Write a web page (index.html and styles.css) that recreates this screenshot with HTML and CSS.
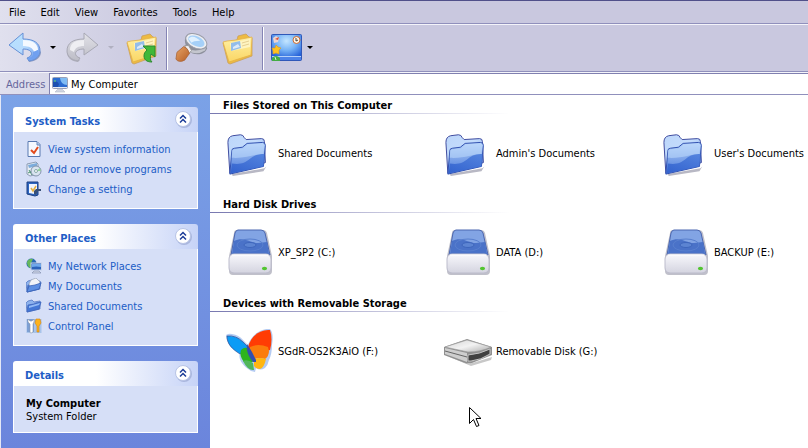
FILE: index.html
```html
<!DOCTYPE html>
<html lang="en">
<head>
<meta charset="utf-8">
<title>My Computer</title>
<link rel="stylesheet" href="styles.css">
</head>
<body>
<svg class="defs" aria-hidden="true">
  <defs>
    <linearGradient id="gBack" x1="0" y1="0" x2="1" y2="1"><stop offset="0" stop-color="#b4e2ff"/><stop offset=".5" stop-color="#b9dcfd"/><stop offset="1" stop-color="#5a8ce8"/></linearGradient>
    <linearGradient id="gFwd" x1="0" y1="0" x2="0" y2="1"><stop offset="0" stop-color="#e2e2e8"/><stop offset="1" stop-color="#bcbcc6"/></linearGradient>
    <linearGradient id="gYel" x1="0" y1="0" x2="0" y2="1"><stop offset="0" stop-color="#fff0a4"/><stop offset="1" stop-color="#fad664"/></linearGradient>
    <linearGradient id="gBlue" x1="0" y1="0" x2="1" y2="1"><stop offset="0" stop-color="#bcd6fa"/><stop offset=".45" stop-color="#c4dcfc"/><stop offset="1" stop-color="#6f9ae6"/></linearGradient>
    <linearGradient id="gFront" x1="0" y1="0" x2="0" y2="1"><stop offset="0" stop-color="#b4d2fa"/><stop offset="1" stop-color="#4a78d8"/></linearGradient>
    <linearGradient id="gDeep" x1="1" y1="0" x2="0" y2="1"><stop offset="0" stop-color="#4a7cdc"/><stop offset="1" stop-color="#2e5ecc"/></linearGradient>
    <linearGradient id="gWhite" x1="0" y1="0" x2="0" y2="1"><stop offset="0" stop-color="#f8f8fc"/><stop offset="1" stop-color="#d4d4e0"/></linearGradient>
    <linearGradient id="gGrey" x1="0" y1="0" x2="1" y2="1"><stop offset="0" stop-color="#d4d4d4"/><stop offset=".5" stop-color="#f2f2f2"/><stop offset="1" stop-color="#acacac"/></linearGradient>
    <linearGradient id="gWood" x1="0" y1="0" x2="1" y2="1"><stop offset="0" stop-color="#e8a466"/><stop offset="1" stop-color="#b45c24"/></linearGradient>
    <radialGradient id="gDesk" cx=".5" cy=".25" r=".7"><stop offset="0" stop-color="#c4e6ff"/><stop offset=".5" stop-color="#78b4f6"/><stop offset="1" stop-color="#2460d8"/></radialGradient>

    <symbol id="folder" viewBox="-1 -4 50 50">
      <path d="M5 43l34-6 2-2-3 5-32 5z" fill="#b8b8c4"/>
      <path d="M3 42L1 10q0-6 5-7l8-1q3 0 4 3l2 2 16-1q3 0 3 3l1 22z" fill="url(#gBlue)" stroke="#3a469c"/>
      <path d="M3 43L5 19q0-3 3-3l8-1 5-4 16-1q3 0 3 3l-2 22z" fill="url(#gFront)" stroke="#2c4cae"/>
      <path d="M5 26L5 19q0-2 3-2l9-1 5-4 14-1q3 0 3 2l-1 9c-9 0-18 5-33 4z" fill="#c0dafc" opacity=".55"/>
      <path d="M4 42L5 32c9 1 13 0 19-5 4-4 10-5 15-5l-1 13z" fill="url(#gDeep)" opacity=".85"/>
    </symbol>
    <symbol id="drive" viewBox="0 -1 48 48">
      <path d="M11 1h26q3 0 4 3l5 23v15q0 4-4 4H7q-4 0-4-4V27L8 4q0-3 3-3z" fill="#c0c0ca"/>
      <path d="M12 1h23q3 0 4 3l5 22H5L9 4q1-3 3-3z" fill="#82a4e4" stroke="#4a66b0"/>
      <path d="M8 12c10-5 16 2 24 2 4 0 6-1 9-1l2 12H6z" fill="#4a72c8"/>
      <ellipse cx="24" cy="16" rx="13" ry="6" fill="none" stroke="#587fce"/>
      <ellipse cx="24" cy="16" rx="6" ry="2.500" fill="#5c84d2" stroke="#3e66bc"/>
      <rect x="3" y="25" width="42" height="19" rx="5" fill="url(#gWhite)" stroke="#bcbccc"/>
      <path d="M6 26h36" stroke="#fff"/>
      <ellipse cx="38.500" cy="39.500" rx="2.600" ry="1.700" fill="#52c530"/>
    </symbol>
    <symbol id="butterfly" viewBox="0 0 48 48">
      <path d="M0 8q3-2 6-1 7 1 11 6l5 5C25 9 34 1 44 2q4 4 2 16 0 9-3 15-1 5-4 8-5 3-9 0l-1 4-4-1C15 38 12 31 14 26 7 23 0 16 0 8z" fill="#b4cbf2"/>
      <path d="M1 9q9-1 16 6l5 5-1 4-7 3C6 22 1 17 1 9z" fill="#0c9cf5" stroke="#2e4c94" stroke-width=".7"/>
      <path d="M22 20C25 9 34 2 44 3q3 9 0 20-8 3-21 0z" fill="#ff3c04"/>
      <path d="M24 20q8-4 18 0l1 4q0 5-4 8-7-2-10 0l-5-9z" fill="#fb7c0c"/>
      <path d="M28 32q6-2 12 0-2 9-6 10-4 0-6-3z" fill="#ffb610"/>
      <path d="M15 23q3-3 6-2l6 14h-9q-5-6-3-12z" fill="#2db41e"/>
      <path d="M17 34q5-2 10 2l1 7q-6 1-11-9z" fill="#50b65c"/>
      <path d="M21 17q2 3 5 8l4 8v2h-3c-5-6-7-12-6-18z" fill="#344fae"/>
    </symbol>
    <symbol id="removable" viewBox="0 0 48 48">
      <path d="M1 28l24 9 23-7-1 3-20 6z" fill="#c8c8c8"/>
      <path d="M0 20l23-8 25 8v8l-20 8q-4 1-7 0L0 28z" fill="#909090"/>
      <path d="M1 20l22-7 24 7q-10 5-23 5z" fill="url(#gGrey)" stroke="#999" stroke-width=".6"/>
      <path d="M1 21l22 5v9L1 27z" fill="#cecece"/>
      <path d="M1 24l22 6" stroke="#666"/>
      <path d="M24 28q12-1 22-6v5q-9 6-19 7h-3z" fill="#404040" stroke="#c4c4c4"/>
    </symbol>
    <symbol id="folderY" viewBox="-1 0 34 34">
      <path d="M2 12l14-3 1-4 8-2 3 3 3 1v18l-22 8-2-1z" fill="#eebb41" stroke="#c9a05c" stroke-width=".8"/>
      <path d="M2 11l4-1 9-1 16-3-1 18-22 7z" fill="url(#gYel)" stroke="#e3b148" stroke-width=".8"/>
      <path d="M9 12l20-4v8L10 20z" fill="#fff4c0"/>
      <path d="M10 12l9-2 1 7-10 3z" fill="#93bdea"/>
      <path d="M12 16l5-3 2 3-7 2z" fill="#dceafa"/>
      <path d="M21 12l7-2M21 15l7-2" stroke="#e6cf92"/>
    </symbol>
    <symbol id="folderS" viewBox="0 0 16 16">
      <path d="M1 14L0 5l2-2 4-1 2 2 6-1v8z" fill="#8db2ed" stroke="#5578c4" stroke-width=".8"/>
      <path d="M1 14l1-7 6-1 2-1 5-1-2 7z" fill="#4477d6" stroke="#3f66bc" stroke-width=".8"/>
      <path d="M3 8l11-3-1 2-10 3z" fill="#93baf5"/>
    </symbol>
    <symbol id="chev" viewBox="0 0 20 20">
      <circle cx="11" cy="11" r="8" fill="#a9b6dd"/>
      <circle cx="10" cy="10" r="7.500" fill="#fff" stroke="#b8c4e6"/>
      <path d="M7 9.500l3-3 3 3M7 13.500l3-3 3 3" fill="none" stroke="#1c3c98" stroke-width="1.500"/>
    </symbol>
  </defs>
</svg>

<header class="chrome">
  <nav class="menubar" aria-label="Menu">
    <button>File</button><button>Edit</button><button>View</button><button>Favorites</button><button>Tools</button><button>Help</button>
  </nav>

  <div class="toolbar">
    <button class="tool split" aria-label="Back">
      <svg class="tool-icon" viewBox="0 0 34 34"><path d="M21 31c8-1 12-5 12-10l-2-2-1 6-10 4z" fill="#8d9ac0"/><path d="M1 14L15 2v6c11 0 17 4 17 12 0 5-4 9-11 10l-2-3c7-2 6-9-4-9v6z" fill="url(#gBack)" stroke="#6690d6"/><path d="M15 9c10 0 15 4 15 10l-4 2c-1-4-5-6-11-6z" fill="#f4f9ff"/><path d="M25 21l5-2c2 6-2 9-9 10l-1-2q6-1 5-6z" fill="#70a0f0"/></svg>
      <svg class="caret" viewBox="0 0 6 4"><path d="M0 0h6L3 3z"/></svg>
    </button>
    <button class="tool split" aria-label="Forward" disabled>
      <svg class="tool-icon" viewBox="0 0 34 34"><path d="M12 31C4 30 1 26 1 21l2-2 1 6 10 4z" fill="#b0b0bc"/><path d="M32 14L18 2v6C7 8 1 12 1 20c0 5 4 9 11 10l2-3c-7-2-6-9 4-9v6z" fill="url(#gFwd)" stroke="#a8a8b4"/><path d="M18 9C8 9 4 13 4 19l4 2c1-4 4-6 10-6z" fill="#eeeef2"/></svg>
      <svg class="caret pale" viewBox="0 0 6 4"><path d="M0 0h6L3 3z"/></svg>
    </button>
    <button class="tool up" aria-label="Up">
      <svg class="tool-icon" viewBox="0 0 34 34"><use href="#folderY"/><path d="M19 15h12v11l-4-3c-1 4-1 6 1 8-6 0-8-3-8-6 0-3 1-4 3-6z" fill="#40b838" stroke="#2c8a30"/></svg>
    </button>
    <span class="sep"></span>
    <button class="tool search" aria-label="Search">
      <svg class="tool-icon" viewBox="-1 0 35 35"><path d="M11 6c6-7 17-2 20 5l2 7c-2 7-14 8-19 2-3-4-5-10-3-14z" fill="#8d909c"/><path d="M12 17q8 6 20 0l-1 3q-8 5-17 1z" fill="#c4c6ce"/><ellipse cx="22" cy="10.500" rx="11.500" ry="7" transform="rotate(25 22 10.500)" fill="#eceef2" stroke="#9a9da8"/><ellipse cx="22" cy="10.500" rx="9" ry="5" transform="rotate(25 22 10.500)" fill="#a5d0f8"/><path d="M14 8c3-4 8-2 12 2-5 0-8 1-9 2z" fill="#e0f1ff"/><path d="M10 15l4 0 3 5-3 4z" fill="#f0f0f4" stroke="#999"/><path d="M2 22l7-6q4 1 6 7l-5 7q-6 3-9-1z" fill="url(#gWood)" stroke="#a86438" stroke-width=".8"/></svg>
    </button>
    <button class="tool folders" aria-label="Folders">
      <svg class="tool-icon"><use href="#folderY"/></svg>
    </button>
    <span class="sep"></span>
    <button class="tool split views" aria-label="Views">
      <svg class="tool-icon" viewBox="0 1 34 34"><rect x="1.500" y="4.500" width="30" height="26" rx="1" fill="url(#gDesk)" stroke="#3058b8"/><rect x="2" y="27" width="29" height="3" fill="#4c82e8"/><path d="M2 26.500h29" stroke="#b4d0fa"/><circle cx="26.500" cy="10" r="3.500" fill="#fff4e4" stroke="#d06c30"/><path d="M26 8v3l2-1" stroke="#444" fill="none"/><path d="M3 8l3-2 3 2-1 4-4 1z" fill="#eed4ce"/><path d="M5 9l4-2-1 3z" fill="#d85038"/><path d="M6 15l2 2 3 1-2 2v4l-3-1-3 1v-3l-1-3h3z" fill="#ffc21e" stroke="#d89820" stroke-width=".6"/><path d="M2 28q4-4 8 0v3H2z" fill="#44ac44"/><path d="M5 27l1 3" stroke="#d8f4d0"/></svg>
      <svg class="caret" viewBox="0 0 6 4"><path d="M0 0h6L3 3z"/></svg>
    </button>
  </div>

  <div class="address">
    <label for="addr">Address</label>
    <div class="address-box">
      <svg class="small" viewBox="0 0 16 16"><rect x=".5" y=".5" width="15" height="11" rx="1" fill="#e8ecf4" stroke="#98a0b8"/><rect x="1" y="1" width="14" height="9" fill="#2c6cd0"/><path d="M8 1h7v7q-6 0-7-7z" fill="#80bcf4"/><path d="M1 5q4-2 6 2l-1 3H1z" fill="#1c50b0"/><path d="M2 4h2" stroke="#6ce06c"/><path d="M6 12h4l3 3H3z" fill="#d2d6e2" stroke="#b4b8c6" stroke-width=".6"/></svg>
      <input id="addr" type="text" value="My Computer">
    </div>
  </div>
</header>

<div class="body">
  <aside class="side">
    <section class="panel">
      <header><h2>System Tasks</h2><button aria-label="Collapse System Tasks"><svg><use href="#chev"/></svg></button></header>
      <ul>
        <li><a href="#"><svg class="small" viewBox="0 0 16 16"><path d="M2 .5h9l3 3v12H2z" fill="#f5f8ff" stroke="#5878b0"/><path d="M11 1v3h3" fill="#b8ccea" stroke="#6888bc"/><path d="M5 9l3 3 4-6" fill="none" stroke="#e24a1c" stroke-width="2"/></svg>View system information</a></li>
        <li><a href="#"><svg class="small" viewBox="0 0 16 16"><path d="M1 3l9-2 2 2v10l-8 2-3-2z" fill="#e8edf4" stroke="#8c9cb4"/><path d="M2 4l9-2v3L3 7z" fill="#7cacdc"/><path d="M3 9l3 5M2 12l4-2" stroke="#4b9470"/><circle cx="10" cy="10" r="5" fill="#d9e4f0" stroke="#8494ac"/><path d="M10 10l4-3 1 3z" fill="#92d09a"/><circle cx="10" cy="10" r="1.500" fill="#fff" stroke="#8aa"/></svg>Add or remove programs</a></li>
        <li><a href="#"><svg class="small" viewBox="0 0 16 16"><path d="M1 1h11v13l-3 1-8-2z" fill="#2d65c0" stroke="#1c3f80"/><path d="M3 3h8v8l-3 2-5-1z" fill="#eff5ff"/><path d="M5 7l2 3 3-5" fill="none" stroke="#e5b040" stroke-width="1.500"/><path d="M8 10l2-2h5v2h-3l-2 4-2-1z" fill="#385078"/></svg>Change a setting</a></li>
      </ul>
    </section>

    <section class="panel">
      <header><h2>Other Places</h2><button aria-label="Collapse Other Places"><svg><use href="#chev"/></svg></button></header>
      <ul>
        <li><a href="#"><svg class="small" viewBox="0 0 16 16"><circle cx="5.500" cy="5.500" r="5" fill="#2868b4"/><path d="M1 4q2-4 6-3L5 5l3 2-4 3q-3-2-3-6z" fill="#67b85c"/><rect x="5" y="5" width="10.500" height="7" fill="#2c62ba" stroke="#c6d2e8"/><path d="M6 6h9v3q-5-1-9 0z" fill="#6fa8ec"/><path d="M8 13h5l2 2H6z" fill="#d0d8e8" stroke="#7888a8" stroke-width=".6"/></svg>My Network Places</a></li>
        <li><a href="#"><svg class="small" viewBox="0 0 16 16"><use href="#folderS"/><path d="M3 6l2-4 5-2 4 4-1 3-9 3z" fill="#f2f4f8" stroke="#9aa4b8" stroke-width=".7"/><path d="M1 14l2-6 6-1 6-2-2 6z" fill="#5d8fe2" stroke="#3c64b8" stroke-width=".8"/></svg>My Documents</a></li>
        <li><a href="#"><svg class="small"><use href="#folderS"/></svg>Shared Documents</a></li>
        <li><a href="#"><svg class="small" viewBox="0 0 16 16"><rect x=".5" y="1" width="15" height="14" fill="#a8c4ea"/><rect x="1" y="1" width="7" height="13" fill="#7c9fd4"/><path d="M2 1v3l2 2v8q0 1 1 1t2-1V6l1-2V1L6 3H4z" fill="#fff" stroke="#8894a8" stroke-width=".6"/><path d="M10 1h4l1 4-2 3v6h-2V8L9 5z" fill="#fdb31c" stroke="#d48510" stroke-width=".6"/></svg>Control Panel</a></li>
      </ul>
    </section>

    <section class="panel">
      <header><h2>Details</h2><button aria-label="Collapse Details"><svg><use href="#chev"/></svg></button></header>
      <div class="details"><strong>My Computer</strong><span>System Folder</span></div>
    </section>
  </aside>

  <main class="files">
    <section class="group">
      <h2>Files Stored on This Computer</h2>
      <div class="items">
        <a href="#"><svg><use href="#folder"/></svg>Shared Documents</a>
        <a href="#"><svg><use href="#folder"/></svg>Admin's Documents</a>
        <a href="#"><svg><use href="#folder"/></svg>User's Documents</a>
      </div>
    </section>
    <section class="group">
      <h2>Hard Disk Drives</h2>
      <div class="items">
        <a href="#"><svg><use href="#drive"/></svg>XP_SP2 (C:)</a>
        <a href="#"><svg><use href="#drive"/></svg>DATA (D:)</a>
        <a href="#"><svg><use href="#drive"/></svg>BACKUP (E:)</a>
      </div>
    </section>
    <section class="group">
      <h2>Devices with Removable Storage</h2>
      <div class="items">
        <a href="#"><svg><use href="#butterfly"/></svg>SGdR-OS2K3AiO (F:)</a>
        <a href="#"><svg><use href="#removable"/></svg>Removable Disk (G:)</a>
      </div>
    </section>
    <svg class="pointer" viewBox="0 0 12 21" aria-hidden="true"><path d="M.5 .5v16l4-4 3 7 2.500-1-3-7h5z" fill="#fff" stroke="#000"/></svg>
  </main>
</div>
</body>
</html>
```
FILE: styles.css
```css
* { box-sizing: border-box; }

body {
  margin: 0;
  min-height: 100vh;
  display: flex;
  flex-direction: column;
  font: 11px/13px "DejaVu Sans Condensed", "Noto Sans", sans-serif;
  color: #000;
  background: #fff;
  overflow: hidden;
}

button {
  border: 0;
  padding: 0;
  background: none;
  font: inherit;
  color: inherit;
}

a { text-decoration: none; color: inherit; white-space: nowrap; }
h2 { margin: 0; font-size: 11px; line-height: 13px; font-weight: bold; }
svg { display: block; flex: none; }
.defs { position: absolute; width: 0; height: 0; }
.small { width: 16px; height: 16px; }

.chrome { background: linear-gradient(90deg, #e0e0ee, #c9c8df 160px); }

.menubar {
  display: flex;
  gap: 15px;
  height: 24px;
  padding-left: 9px;
  border-top: 1px solid #50508a;
  border-bottom: 1px solid #9090bc;
}

.toolbar {
  display: flex;
  align-items: center;
  height: 48px;
  padding-left: 8px;
  border-top: 1px solid #f4f4fa;
  border-bottom: 1px solid #9090bc;
}

.tool { display: flex; align-items: center; }
.tool-icon { width: 34px; height: 34px; }
.split { gap: 8px; margin-right: 10px; }
.caret { width: 6px; height: 4px; fill: #000; }
.pale { fill: #b0b0c0; }
.up { margin-right: 8px; }
.sep {
  width: 2px;
  height: 43px;
  background: linear-gradient(90deg, #8484b4 50%, #fff 50%);
}
.search { margin: 0 12px 0 6px; }
.folders { margin-right: 8px; }
.views { margin-left: 6px; gap: 3px; }

.address {
  display: flex;
  height: 23px;
  border-top: 1px solid #f4f4fa;
  border-bottom: 1px solid #9090bc;
}
.address label {
  width: 49px;
  padding: 5px 0 0 6px;
  color: #66669c;
}
.address-box {
  flex: 1;
  display: flex;
  align-items: center;
  gap: 3px;
  padding: 1px 0 0 2px;
  border: solid #8080b0;
  border-width: 1px 0 0 1px;
  background: #fff;
}
.address input {
  flex: 1;
  min-width: 0;
  border: 0;
  padding: 0;
  outline: 0;
  font: inherit;
  background: none;
}

.body { flex: 1; display: flex; border-left: 1px solid #e4e8f6; }

.side {
  flex: none;
  width: 209px;
  padding: 12px;
  display: flex;
  flex-direction: column;
  gap: 15px;
  background: linear-gradient(#7ba2e7, #6b85dc);
}

.panel header {
  display: flex;
  align-items: center;
  justify-content: space-between;
  height: 25px;
  padding: 0 5px 2px 12px;
  border-radius: 3px 3px 0 0;
  background: linear-gradient(90deg, #fff 45%, #c6d3f7);
  color: #215dc6;
}
.panel h2 { padding-top: 5px; }
.panel header svg { width: 20px; height: 20px; }

.panel ul, .details {
  margin: 0;
  border: 1px solid #fff;
  border-top: 0;
  background: #d6dff7;
}
.panel ul { list-style: none; padding: 7px 12px 9px; }
.panel li a {
  display: flex;
  align-items: center;
  gap: 6px;
  height: 20px;
  color: #215dc6;
}
.details {
  display: flex;
  flex-direction: column;
  padding: 11px 12px 9px;
}

.files { position: relative; flex: 1; min-width: 0; overflow: hidden; }

.group h2 {
  height: 19px;
  padding: 4px 0 0 13px;
  background: linear-gradient(90deg, #7878b0, #fff 300px) bottom / 100% 1px no-repeat;
}
.items {
  display: grid;
  grid-template-columns: 218px 218px 1fr;
  height: 80px;
  padding-left: 16px;
}
.items a {
  display: flex;
  align-items: center;
  gap: 4px;
  height: 78px;
}
.items svg { width: 48px; height: 48px; }

.pointer {
  position: absolute;
  left: 259px;
  top: 312px;
  width: 12px;
  height: 21px;
}
```
